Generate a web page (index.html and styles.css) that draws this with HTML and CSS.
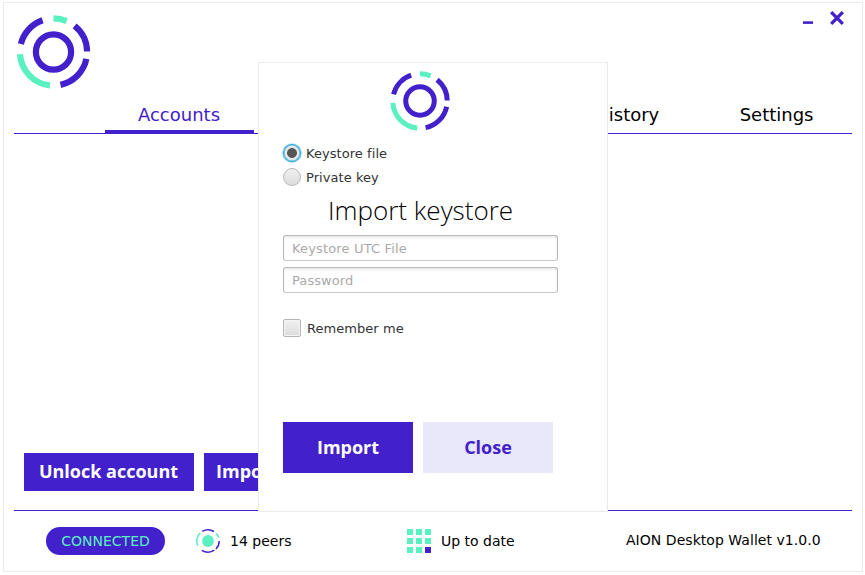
FILE: index.html
```html
<!DOCTYPE html>
<html lang="en">
<head>
<meta charset="utf-8">
<title>AION Desktop Wallet</title>
<link rel="stylesheet" href="styles.css">
</head>
<body>
<svg class="defs" width="0" height="0">
  <symbol id="logo" viewBox="0 0 74 74">
    <g fill="none" stroke-width="6.2">
      <circle cx="37" cy="37" r="17.6" stroke="#4221cc"/>
      <g transform="rotate(-90 37 37)">
        <circle cx="37" cy="37" r="33.6" pathLength="360" stroke="#5af0bf" stroke-dasharray="23 163 80 94"/>
        <circle cx="37" cy="37" r="33.6" pathLength="360" stroke="#4221cc" stroke-dasharray="0 39 50 13 66 116 57 19"/>
      </g>
    </g>
  </symbol>
</svg>
<div class="window">
  <header class="titlebar">
    <svg class="brand"><use href="#logo"/></svg>
    <div class="controls">
      <svg width="10" height="3"><path d="M0 1.6h10" stroke="#4221cc" stroke-width="2.6"/></svg>
      <svg width="14" height="14"><path d="M1.2 1.2 12.8 12.8M12.8 1.2 1.2 12.8" stroke="#4221cc" stroke-width="3.3"/></svg>
    </div>
  </header>
  <nav class="tabs">
    <a class="tab active">Accounts</a>
    <a class="tab">Send</a>
    <a class="tab">Receive</a>
    <a class="tab">History</a>
    <a class="tab">Settings</a>
  </nav>
  <main class="content">
    <button class="action">Unlock account</button>
    <button class="action second">Import account</button>
  </main>
  <footer class="status">
    <span class="pill">CONNECTED</span>
    <span class="peers">
      <svg width="24" height="24" viewBox="0 0 24 24">
        <circle cx="12" cy="12" r="5.9" fill="#5af0bf"/>
        <g fill="none" stroke-width="1.5" transform="rotate(-90 12 12)">
          <circle cx="12" cy="12" r="11.2" pathLength="360" stroke="#5af0bf" stroke-dasharray="0 47 25 172 72 44"/>
          <circle cx="12" cy="12" r="11.2" pathLength="360" stroke="#4221cc" stroke-dasharray="32 58 45 10 69 115 31 0"/>
        </g>
      </svg>
      14 peers
    </span>
    <span class="sync">
      <span class="blocks"><i></i><i></i><i></i><i></i><i></i><i></i><i></i><i></i><i class="last"></i></span>
      Up to date
    </span>
    <span class="version">AION Desktop Wallet v1.0.0</span>
  </footer>
  <section class="dialog">
    <svg class="mark"><use href="#logo"/></svg>
    <label class="option"><span class="radio on"></span>Keystore file</label>
    <label class="option"><span class="radio"></span>Private key</label>
    <h1>Import keystore</h1>
    <input class="field wide" placeholder="Keystore UTC File">
    <input class="field" placeholder="Password">
    <label class="remember"><span class="check"></span>Remember me</label>
    <div class="buttons">
      <button class="primary">Import</button>
      <button class="secondary">Close</button>
    </div>
  </section>
</div>
</body>
</html>
```
FILE: styles.css
```css
* { box-sizing: border-box; }
body { margin: 0; background: #fff; color: #000; font-family: "DejaVu Sans", sans-serif; overflow: hidden; }
button { border: 0; padding: 0 0 2px; font: bold 18px "Open Sans", sans-serif; color: #fff; background: #4221cc; }
svg { display: block; flex: none; }
.defs { position: absolute; }
.window { position: relative; display: flex; flex-direction: column; width: 860px; height: 570px; margin: 2px 0 0 3px; padding: 0 10px; border: 1px solid #ebebeb; }
.titlebar { display: flex; justify-content: space-between; height: 93px; padding: 11.5px 8px 0 2px; }
.brand { width: 74px; height: 74px; margin-left: 0.5px; transform: translateX(-0.5px); }
.controls { display: flex; gap: 17px; margin-top: -3.5px; }
.controls svg:first-child { margin-top: 10px; }
.tabs { display: flex; height: 38px; padding-left: 91px; border-bottom: 1px solid #4221cc; }
.tab { width: 149.3px; height: 37px; padding-top: 8px; font-size: 18px; line-height: 21px; text-align: center; }
.tab.active { width: 149px; padding-right: 1px; color: #4221cc; border-bottom: 3px solid #4221cc; }
.content { flex: 1; display: flex; align-items: flex-end; gap: 10px; padding: 0 10px 19px; border-bottom: 1px solid #4221cc; }
.action { width: 170px; height: 38px; }
.action:first-child { padding-right: 1px; }
.second { padding-left: 12px; text-align: left; }
.status { display: flex; align-items: center; height: 60px; padding-left: 32px; font-size: 14px; }
.pill { width: 119px; height: 28px; border-radius: 14px; background: #4221cc; color: #5af0bf; line-height: 28px; text-align: center; }
.peers { display: flex; align-items: center; gap: 10px; width: 211px; margin-left: 31px; }
.sync { display: flex; align-items: center; gap: 10px; width: 219px; }
.blocks { display: grid; grid-template-columns: repeat(3, 6px); grid-auto-rows: 6px; gap: 3px; }
.blocks i { background: #5af0bf; }
.blocks .last { background: #4221cc; }
.version { white-space: nowrap; margin-top: -2px; letter-spacing: 0.04px; }
.dialog { position: absolute; left: 254px; top: 59px; width: 350px; height: 450px; padding: 8px 24px 0; display: flex; flex-direction: column; background: #fff; border: 1px solid #ebebeb; }
.mark { width: 60px; height: 60px; margin: 0 0 10px 107px; }
.option { display: flex; align-items: center; gap: 5px; height: 24px; font-size: 13px; color: #333; letter-spacing: 0.06px; }
.radio { width: 18px; height: 18px; border: 1px solid #b9b9b9; border-radius: 50%; background: linear-gradient(#f0f0f0, #dcdcdc); }
.radio.on { border-color: #1fa3d1; background: radial-gradient(circle, #555 0 4.5px, #e6e6e6 5.3px); box-shadow: 0 0 1px 0.6px #6cc4e2, inset 0 0 0 0.6px #6cc4e2; }
h1 { margin: 3px 0 6px; font: 300 26px/37px "Open Sans", sans-serif; text-align: center; width: 275px; }
.field { width: 275px; height: 26px; margin: 0 0 6px; padding: 0 8px; font: 13px "DejaVu Sans", sans-serif; letter-spacing: 0.08px; border: 1px solid #b8b8b8; border-bottom-color: #c8c8c8; border-radius: 3px; box-shadow: inset 0 2px 2px #ededed; background: #fff; }
.wide { letter-spacing: 0.16px; }
.field::placeholder { color: #aaa; opacity: 1; }
.remember { display: flex; align-items: center; gap: 6px; height: 18px; margin-top: 20px; font-size: 13px; color: #333; letter-spacing: 0.05px; }
.check { width: 18px; height: 18px; border: 1px solid #b5b5b5; border-radius: 2px; background: linear-gradient(#f0f0f0, #dcdcdc); box-shadow: inset 0 0 0 1px #f4f4f4; }
.buttons { display: flex; gap: 10px; margin-top: 85px; }
.buttons button { width: 130px; height: 51px; }
.buttons .secondary { background: #e9e8fa; color: #4221cc; }
```
